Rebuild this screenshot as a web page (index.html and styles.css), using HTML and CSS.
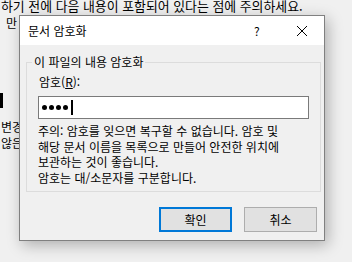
FILE: index.html
```html
<!DOCTYPE html>
<html lang="ko">

<head>
    <meta charset="UTF-8">
    <meta name="viewport" content="width=device-width, initial-scale=1.0">
    <title>문서 암호화</title>
    <link rel="stylesheet" href="styles.css">
</head>

<body>
    <div class="back-window">
        <p class="back-line back-top">하기 전에 다음 내용이 포함되어 있다는 점에 주의하세요.</p>
        <p class="back-line back-indent">만</p>
        <div class="back-mark"></div>
        <p class="back-line back-change">변경</p>
        <p class="back-line">않은</p>
    </div>

    <div class="dialog">
        <div class="title-bar">
            <span class="title">문서 암호화</span>
            <span class="help">?</span>
            <svg class="close" width="12" height="12" viewBox="0 0 12 12">
                <path d="M1 1 L11 11 M11 1 L1 11" stroke="#000" stroke-width="1" fill="none" />
            </svg>
        </div>
        <div class="dialog-body">
            <fieldset class="group">
                <legend>이 파일의 내용 암호화</legend>
                <label class="field-label" for="pwd">암호(<u>R</u>):</label>
                <div class="password" id="pwd">
                    <span class="dot"></span><span class="dot"></span><span class="dot"></span><span class="dot"></span>
                    <span class="caret"></span>
                </div>
                <p class="note">주의: 암호를 잊으면 복구할 수 없습니다. 암호 및<br>해당 문서 이름을 목록으로 만들어 안전한 위치에<br>보관하는 것이 좋습니다.<br>암호는 대/소문자를 구분합니다.</p>
            </fieldset>
            <div class="buttons">
                <button class="btn btn-default">확인</button>
                <button class="btn">취소</button>
            </div>
        </div>
    </div>
</body>

</html>
```

FILE: styles.css
```css
body,
html {
    margin: 0;
    padding: 0;
    height: 100%;
    background: #f0f0f0;
    font-family: "Noto Sans CJK KR", "Noto Sans", sans-serif;
    font-size: 12px;
    color: #000;
    overflow: hidden;
    position: relative;
}

/* window behind the dialog */
.back-window {
    padding-left: 1px;
}

.back-line {
    margin: 0;
    line-height: 16px;
    white-space: nowrap;
}

.back-top {
    margin-top: -2px;
    font-size: 12.9px;
}

.back-indent {
    padding-left: 5px;
    margin-top: 1px;
}

.back-mark {
    width: 3px;
    height: 15px;
    background: #000;
    margin-top: 62px;
    margin-left: -1px;
}

.back-change {
    margin-top: 11px;
}

/* dialog */
.dialog {
    position: absolute;
    left: 19px;
    top: 15px;
    width: 304px;
    border: 1px solid #808080;
    background: #f0f0f0;
    box-shadow: 3px 4px 14px rgba(0, 0, 0, 0.28);
}

.title-bar {
    height: 29px;
    background: #fff;
    display: flex;
    align-items: center;
    padding-left: 8px;
}

.title {
    flex: 1;
    line-height: 16px;
}

.help {
    width: 10px;
    margin-right: 32px;
    line-height: 16px;
}

.close {
    margin-right: 16px;
}

.dialog-body {
    padding: 9px 6px 8px 6px;
}

.group {
    margin: 0;
    padding: 0 11px 5px 11px;
    border: 1px solid #dcdcdc;
}

.group legend {
    margin-left: -6px;
    padding: 0 2px;
    line-height: 16px;
}

.field-label {
    display: block;
    margin-top: 4px;
    line-height: 16px;
    padding-left: 1px;
}

.field-label u {
    text-decoration-thickness: 1px;
}

.password {
    margin-top: 6px;
    height: 21px;
    width: 266px;
    border: 1px solid #7a7a7a;
    background: #fff;
    display: flex;
    align-items: center;
    padding-left: 3px;
    gap: 2px;
}

.dot {
    width: 5px;
    height: 5px;
    border-radius: 50%;
    background: #000;
}

.caret {
    width: 2px;
    height: 15px;
    background: #000;
    margin-left: 1px;
}

.note {
    margin: 4px 0 0 0;
    line-height: 15.67px;
    white-space: nowrap;
}

.buttons {
    display: flex;
    justify-content: flex-end;
    gap: 12px;
    margin-top: 15px;
    padding-right: 1px;
}

.btn {
    width: 73px;
    height: 25px;
    border: 1px solid #adadad;
    background: #e1e1e1;
    font-family: inherit;
    font-size: 12px;
    color: #000;
    padding: 0;
}

.btn-default {
    border: 2px solid #0078d7;
}
```
